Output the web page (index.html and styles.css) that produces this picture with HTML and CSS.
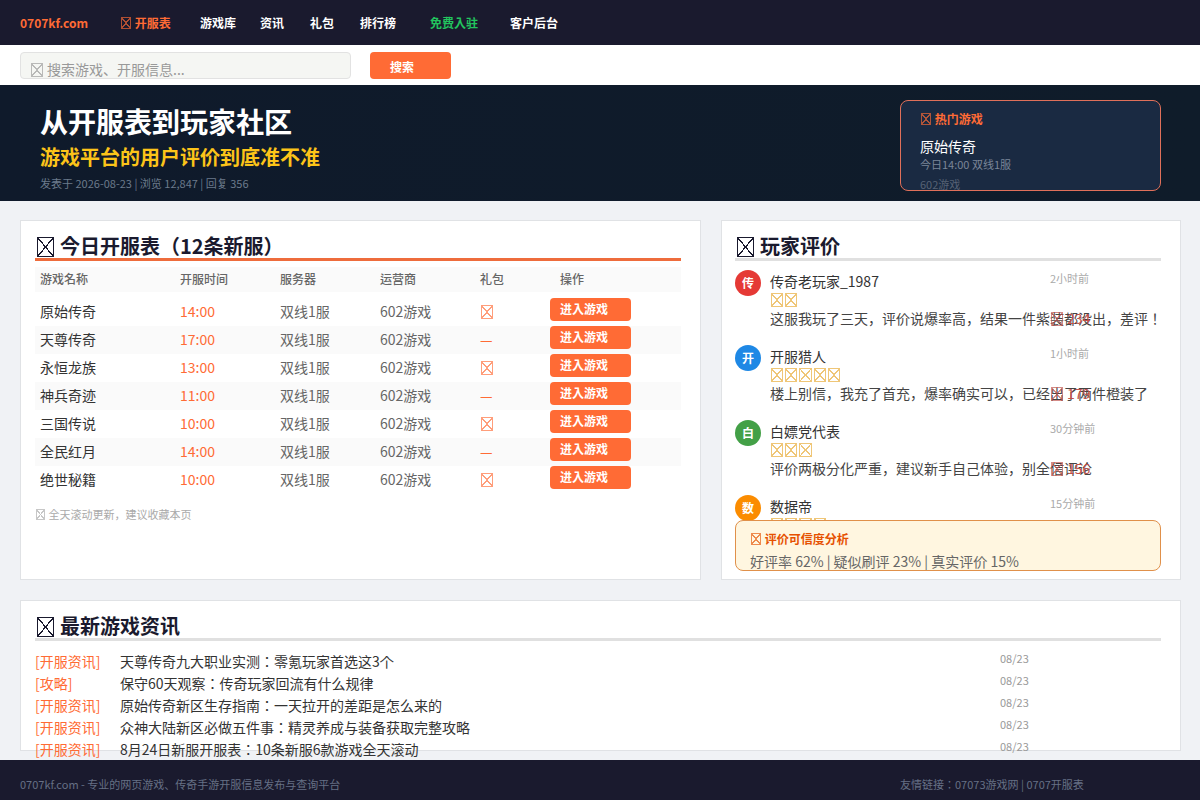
FILE: index.html
```html
<!DOCTYPE html>
<html>
<head>
<meta charset="utf-8">
<title>0707kf.com</title>
<link rel="stylesheet" href="styles.css">
</head>
<body>
<nav class="nav">
  <a class="logo">0707kf.com</a>
  <a class="nav-link active"><i class="tofu"></i>开服表</a>
  <a class="nav-link">游戏库</a>
  <a class="nav-link">资讯</a>
  <a class="nav-link">礼包</a>
  <a class="nav-link">排行榜</a>
  <a class="nav-link join">免费入驻</a>
  <a class="nav-link">客户后台</a>
</nav>
<div class="search">
  <div class="search-input"><i class="tofu"></i>搜索游戏、开服信息...</div>
  <div class="search-btn">搜索</div>
</div>
<header class="hero">
  <div class="hero-text">
    <h1>从开服表到玩家社区</h1>
    <h2>游戏平台的用户评价到底准不准</h2>
    <p>发表于 2026-08-23 | 浏览 12,847 | 回复 356</p>
  </div>
  <aside class="hot">
    <div class="hot-title"><i class="tofu"></i>热门游戏</div>
    <div class="hot-name">原始传奇</div>
    <div class="hot-sub">今日14:00 双线1服</div>
    <div class="hot-op">602游戏</div>
  </aside>
</header>
<main class="main">
  <div class="columns">
    <section class="card card-tall">
      <h3 class="card-title accent"><i class="tofu"></i>今日开服表（12条新服）</h3>
      <div class="table">
        <div class="tr th"><span>游戏名称</span><span>开服时间</span><span>服务器</span><span>运营商</span><span>礼包</span><span class="th-op">操作</span></div>
        <div class="tr"><span class="g">原始传奇</span><span class="t">14:00</span><span>双线1服</span><span>602游戏</span><span class="t"><i class="tofu"></i></span><a class="enter">进入游戏</a></div>
        <div class="tr"><span class="g">天尊传奇</span><span class="t">17:00</span><span>双线1服</span><span>602游戏</span><span class="t">—</span><a class="enter">进入游戏</a></div>
        <div class="tr"><span class="g">永恒龙族</span><span class="t">13:00</span><span>双线1服</span><span>602游戏</span><span class="t"><i class="tofu"></i></span><a class="enter">进入游戏</a></div>
        <div class="tr"><span class="g">神兵奇迹</span><span class="t">11:00</span><span>双线1服</span><span>602游戏</span><span class="t">—</span><a class="enter">进入游戏</a></div>
        <div class="tr"><span class="g">三国传说</span><span class="t">10:00</span><span>双线1服</span><span>602游戏</span><span class="t"><i class="tofu"></i></span><a class="enter">进入游戏</a></div>
        <div class="tr"><span class="g">全民红月</span><span class="t">14:00</span><span>双线1服</span><span>602游戏</span><span class="t">—</span><a class="enter">进入游戏</a></div>
        <div class="tr"><span class="g">绝世秘籍</span><span class="t">10:00</span><span>双线1服</span><span>602游戏</span><span class="t"><i class="tofu"></i></span><a class="enter">进入游戏</a></div>
      </div>
      <p class="note"><i class="tofu"></i>全天滚动更新，建议收藏本页</p>
    </section>
    <section class="card card-tall card-side">
      <h3 class="card-title"><i class="tofu"></i>玩家评价</h3>
      <div class="reviews">
        <article class="review">
          <div class="avatar red">传</div>
          <div class="review-body">
            <div class="review-head"><span class="name">传奇老玩家_1987</span><span class="when">2小时前</span></div>
            <div class="stars"><i class="tofu"></i><i class="tofu"></i></div>
            <p class="say">这服我玩了三天，评价说爆率高，结果一件紫装都没出，差评！</p>
            <span class="likes"><i class="tofu"></i>234</span>
          </div>
        </article>
        <article class="review">
          <div class="avatar blue">开</div>
          <div class="review-body">
            <div class="review-head"><span class="name">开服猎人</span><span class="when">1小时前</span></div>
            <div class="stars"><i class="tofu"></i><i class="tofu"></i><i class="tofu"></i><i class="tofu"></i><i class="tofu"></i></div>
            <p class="say">楼上别信，我充了首充，爆率确实可以，已经出了两件橙装了</p>
            <span class="likes"><i class="tofu"></i>179</span>
          </div>
        </article>
        <article class="review">
          <div class="avatar green">白</div>
          <div class="review-body">
            <div class="review-head"><span class="name">白嫖党代表</span><span class="when">30分钟前</span></div>
            <div class="stars"><i class="tofu"></i><i class="tofu"></i><i class="tofu"></i></div>
            <p class="say">评价两极分化严重，建议新手自己体验，别全信评论</p>
            <span class="likes"><i class="tofu"></i>156</span>
          </div>
        </article>
        <article class="review">
          <div class="avatar orange">数</div>
          <div class="review-body">
            <div class="review-head"><span class="name">数据帝</span><span class="when">15分钟前</span></div>
            <div class="stars"><i class="tofu"></i><i class="tofu"></i><i class="tofu"></i><i class="tofu"></i></div>
          </div>
        </article>
      </div>
      <div class="trust">
        <div class="trust-title"><i class="tofu"></i>评价可信度分析</div>
        <div class="trust-text">好评率 62% | 疑似刷评 23% | 真实评价 15%</div>
      </div>
    </section>
  </div>
  <section class="card card-news">
    <h3 class="card-title"><i class="tofu"></i>最新游戏资讯</h3>
    <ul class="news">
      <li><span class="tag">[开服资讯]</span><span class="headline">天尊传奇九大职业实测：零氪玩家首选这3个</span><span class="date">08/23</span></li>
      <li><span class="tag">[攻略]</span><span class="headline">保守60天观察：传奇玩家回流有什么规律</span><span class="date">08/23</span></li>
      <li><span class="tag">[开服资讯]</span><span class="headline">原始传奇新区生存指南：一天拉开的差距是怎么来的</span><span class="date">08/23</span></li>
      <li><span class="tag">[开服资讯]</span><span class="headline">众神大陆新区必做五件事：精灵养成与装备获取完整攻略</span><span class="date">08/23</span></li>
      <li><span class="tag">[开服资讯]</span><span class="headline">8月24日新服开服表：10条新服6款游戏全天滚动</span><span class="date">08/23</span></li>
    </ul>
  </section>
</main>
<footer class="footer">
  <span>0707kf.com - 专业的网页游戏、传奇手游开服信息发布与查询平台</span>
  <span>友情链接：07073游戏网 | 0707开服表</span>
</footer>
</body>
</html>
```

FILE: styles.css
```css
* { box-sizing: border-box; }
html, body { margin: 0; height: 800px; overflow: hidden; }
body {
  background: #f0f2f5;
  color: #333;
  font-family: "Noto Sans CJK JP", "Noto Sans", sans-serif;
  font-size: 14px;
}
h1, h2, h3, p, ul { margin: 0; padding: 0; }
ul { list-style: none; }

.tofu {
  display: inline-block;
  width: .87em;
  height: 1em;
  margin: 0 .3em 0 .05em;
  vertical-align: -.12em;
  border: 1px solid currentColor;
  opacity: .65;
  background:
    linear-gradient(to top right, transparent calc(50% - .6px), currentColor calc(50% - .6px), currentColor calc(50% + .6px), transparent calc(50% + .6px)),
    linear-gradient(to bottom right, transparent calc(50% - .6px), currentColor calc(50% - .6px), currentColor calc(50% + .6px), transparent calc(50% + .6px));
}

.nav {
  display: grid;
  grid-template-columns: 100px 80px 60px 50px 50px 70px 80px auto;
  align-items: center;
  height: 45px;
  padding: 1px 0 0 20px;
  background: #1a1a2e;
  font-size: 12px;
  font-weight: 700;
  color: #fff;
  line-height: 18px;
}
.logo { color: #ff6b35; font-size: 12px; }
.nav-link.active { color: #ff6b35; }
.nav-link.join { color: #22c55e; }

.search {
  display: flex;
  height: 40px;
  padding: 7px 20px 0;
  background: #fff;
}
.search-input {
  width: 331px;
  height: 27px;
  padding: 6px 0 0 9px;
  overflow: hidden;
  border: 1px solid #e2e2e2;
  border-radius: 4px;
  background: #f5f6f3;
  color: #999;
  line-height: 20px;
}
.search-btn {
  width: 81px;
  height: 27px;
  margin-left: 19px;
  padding: 5px 0 0 20px;
  border-radius: 4px;
  background: #ff6b35;
  color: #fff;
  font-size: 12px;
  font-weight: 700;
  line-height: 20px;
}

.hero {
  display: flex;
  justify-content: space-between;
  align-items: flex-start;
  height: 116px;
  padding: 15px 39px 0 40px;
  background: linear-gradient(90deg, #0f1a2b, #0f1c2a);
}
.hero-text { padding-top: 1px; }
.hero h1 { color: #fff; font-size: 28px; font-weight: 700; line-height: 40px; }
.hero h2 { margin-top: 2px; color: #fcc419; font-size: 20px; font-weight: 700; line-height: 28px; }
.hero p { margin-top: 4px; color: #6c7a8c; font-size: 11px; line-height: 16px; }
.hot {
  width: 261px;
  height: 91px;
  padding: 9px 19px;
  overflow: hidden;
  border: 1px solid #e0705a;
  border-radius: 8px;
  background: #1a2a42;
}
.hot-title { color: #ff6b35; font-size: 12px; font-weight: 700; line-height: 18px; }
.hot-name { margin-top: 8px; color: #fff; font-size: 14px; line-height: 20px; }
.hot-sub { margin-top: 1px; color: #7a8699; font-size: 11px; line-height: 14px; }
.hot-op { margin-top: 6px; color: #566275; font-size: 11px; line-height: 14px; }

.main { padding: 19px 19px 0 20px; }
.columns { display: grid; grid-template-columns: 681px 460px; gap: 20px; }
.card {
  padding: 15px 19px 0 14px;
  border: 1px solid #e0e2e5;
  background: #fff;
}
.card-tall { height: 360px; }
.card-side { padding-left: 13px; }
.card-news { height: 151px; margin-top: 20px; }
.card-title {
  height: 25px;
  border-bottom: 3px solid #e0e0e0;
  color: #1a1a2e;
  font-size: 20px;
  font-weight: 700;
  line-height: 20px;
}
.card-title .tofu { margin: 0 5.5px 0 2px; opacity: 1; font-weight: 400; vertical-align: -3px; }
.card-title.accent { border-bottom-color: #ee6c3c; }

.table { margin-top: 6px; }
.tr {
  display: grid;
  grid-template-columns: 140px 100px 100px 100px 70px 1fr;
  align-items: center;
  height: 28px;
  padding: 0 0 2px 5px;
  color: #666;
  line-height: 20px;
}
.tr:nth-child(odd):not(.th) { background: #fafafa; }
.th {
  height: 25px;
  margin-bottom: 6px;
  background: #fafafa;
  font-size: 12px;
  font-weight: 500;
  line-height: 24px;
}
.th-op { padding-left: 10px; }
.g { color: #333; }
.t { color: #ff6b35; }
.t .tofu { margin: 0 0 0 .05em; }
.enter {
  align-self: start;
  width: 81px;
  height: 23px;
  padding-left: 10px;
  border-radius: 4px;
  background: #ff6b35;
  color: #fff;
  font-size: 12px;
  font-weight: 700;
  line-height: 22px;
}
.note { margin: 12px 0 0; color: #aaa; font-size: 11px; line-height: 16px; }

.reviews { height: 250px; margin-top: 9px; overflow: hidden; }
.review { display: flex; gap: 9px; height: 75px; }
.avatar {
  flex: none;
  width: 26px;
  height: 26px;
  border-radius: 50%;
  color: #fff;
  font-size: 12px;
  font-weight: 700;
  line-height: 26px;
  text-align: center;
}
.red { background: #e53935; }
.blue { background: #1e88e5; }
.green { background: #43a047; }
.orange { background: #fb8c00; }
.review-body { position: relative; flex: 1; padding-top: 1px; }
.review-head { display: grid; grid-template-columns: 280px auto; line-height: 20px; }
.name { color: #333; }
.when { margin-top: -1px; color: #aaa; font-size: 11px; line-height: 16px; }
.stars { display: flex; height: 14px; margin-top: 2px; color: #e8a830; font-size: 14px; }
.stars .tofu { margin: 0 1px 0 1px; vertical-align: 0; }
.say { margin-top: 1px; color: #444; line-height: 20px; white-space: nowrap; }
.likes {
  position: absolute;
  left: 280px;
  top: 38px;
  color: #c0504a;
  line-height: 20px;
  white-space: nowrap;
}
.trust {
  height: 51px;
  padding: 9px 15px 0;
  overflow: hidden;
  border: 1px solid #e0904a;
  border-radius: 8px;
  background: #fff6e0;
}
.trust-title { margin-left: -1px; color: #e65100; font-size: 12px; font-weight: 700; line-height: 18px; }
.trust-text { margin: 3px 0 0 -1px; color: #666; line-height: 20px; }

.news { height: 109px; margin-top: 10px; overflow: hidden; }
.news li { display: flex; height: 22px; line-height: 20px; }
.tag { width: 85px; color: #ff6b35; }
.headline { width: 880px; color: #333; }
.date { margin-top: -1px; color: #999; font-size: 11px; line-height: 16px; }

.footer {
  display: grid;
  grid-template-columns: 880px auto;
  height: 40px;
  margin-top: 9px;
  padding-left: 20px;
  background: #1a1a2e;
  color: #667085;
  font-size: 11px;
  line-height: 48px;
}
```
